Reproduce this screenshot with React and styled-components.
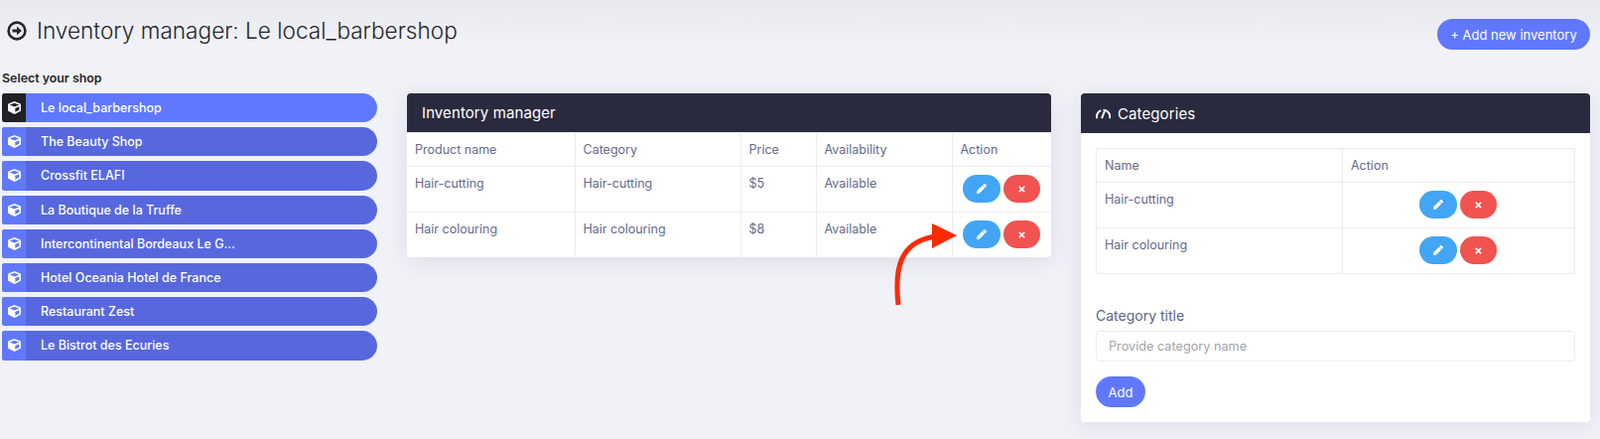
import styled, { createGlobalStyle } from "styled-components";
import { FaCube, FaPen, FaTimes } from "react-icons/fa";

const shops = [
  "Le local_barbershop",
  "The Beauty Shop",
  "Crossfit ELAFI",
  "La Boutique de la Truffe",
  "Intercontinental Bordeaux Le G...",
  "Hotel Oceania Hotel de France",
  "Restaurant Zest",
  "Le Bistrot des Ecuries",
];

const products = [
  ["Hair-cutting", "Hair-cutting", "$5", "Available"],
  ["Hair colouring", "Hair colouring", "$8", "Available"],
];

const categories = ["Hair-cutting", "Hair colouring"];

function RowActions() {
  return (
    <Actions>
      <EditBtn>
        <FaPen />
      </EditBtn>
      <DeleteBtn>
        <FaTimes />
      </DeleteBtn>
    </Actions>
  );
}

export default function App() {
  return (
    <Page>
      <GlobalStyle />
      <TopBar>
        <Title>
          <TitleIcon viewBox="0 0 20 20">
            <circle cx="10" cy="10" r="8.4" />
            <path d="M5.5 8.4 H10 V5.4 L15 10 L10 14.6 V11.6 H5.5 Z" />
          </TitleIcon>
          <span>Inventory manager: Le local_barbershop</span>
        </Title>
        <PrimaryBtn>+ Add new inventory</PrimaryBtn>
      </TopBar>
      <Columns>
        <div>
          <ListLabel>Select your shop</ListLabel>
          <ShopList>
            {shops.map((shop, i) => (
              <ShopItem key={shop} $active={i === 0}>
                <ShopIcon $active={i === 0}>
                  <FaCube />
                </ShopIcon>
                <span>{shop}</span>
              </ShopItem>
            ))}
          </ShopList>
        </div>
        <Card>
          <CardHeader $h={39}>Inventory manager</CardHeader>
          <OpenTable>
            <thead>
              <tr>
                <Th $w={169}>Product name</Th>
                <Th $w={167}>Category</Th>
                <Th $w={76}>Price</Th>
                <Th $w={137}>Availability</Th>
                <Th>Action</Th>
              </tr>
            </thead>
            <tbody>
              {products.map((row) => (
                <tr key={row[0]}>
                  {row.map((cell, i) => (
                    <Td key={i}>{cell}</Td>
                  ))}
                  <Td>
                    <RowActions />
                  </Td>
                </tr>
              ))}
            </tbody>
          </OpenTable>
        </Card>
        <Card>
          <CardHeader $h={40}>
            <GaugeIcon viewBox="0 0 16 12">
              <path d="M1.3 11.5 A7 7 0 0 1 5.6 3" />
              <path d="M8 2.4 A7.4 7.4 0 0 1 15 11.5" />
              <path d="M6.4 11.5 L9.6 3.6" />
            </GaugeIcon>
            Categories
          </CardHeader>
          <CardBody>
            <BorderedTable>
              <thead>
                <tr>
                  <Th $w={248}>Name</Th>
                  <Th>Action</Th>
                </tr>
              </thead>
              <tbody>
                {categories.map((name) => (
                  <tr key={name}>
                    <Td>{name}</Td>
                    <Td>
                      <RowActions />
                    </Td>
                  </tr>
                ))}
              </tbody>
            </BorderedTable>
            <FieldLabel htmlFor="category-title">Category title</FieldLabel>
            <TextInput id="category-title" placeholder="Provide category name" />
            <AddBtn>Add</AddBtn>
          </CardBody>
        </Card>
      </Columns>
      <Arrow viewBox="0 0 70 90">
        <path d="M7 84 C3 48 8 20 45 15" />
        <polygon points="41,2 66,14 41,27" />
      </Arrow>
    </Page>
  );
}

const GlobalStyle = createGlobalStyle`
  * {
    box-sizing: border-box;
  }
  body {
    margin: 0;
    background: #f1f2f8;
    font-family: Inter, "Open Sans", sans-serif;
  }
`;

const Page = styled.div`
  position: relative;
  height: 442px;
  padding: 19px 10px 0 2px;
  overflow: hidden;
  background: linear-gradient(#e8e9ef, #f1f2f8 45px);
`;

const TopBar = styled.div`
  display: flex;
  align-items: flex-start;
  justify-content: space-between;
  height: 31px;
`;

const Title = styled.h1`
  display: flex;
  align-items: center;
  gap: 10px;
  margin: -1px 0 0 5px;
  font-size: 22.6px;
  font-weight: 300;
  line-height: 26px;
  color: #25262b;
`;

const TitleIcon = styled.svg`
  width: 20px;
  height: 20px;
  circle {
    fill: none;
    stroke: #25262b;
    stroke-width: 2.6;
  }
  path {
    fill: #25262b;
  }
`;

const PrimaryBtn = styled.button`
  height: 31px;
  width: 154px;
  padding: 0;
  border: none;
  border-radius: 16px;
  background: #5f78ff;
  color: #fff;
  font: 400 13px Inter, sans-serif;
`;

const Columns = styled.div`
  display: grid;
  grid-template-columns: 378px 649px 513px;
  gap: 30px;
  align-items: start;
  margin-top: 20px;
`;

const ListLabel = styled.div`
  height: 24px;
  font-size: 12.4px;
  font-weight: 600;
  line-height: 18px;
  color: #25262b;
`;

const ShopList = styled.div`
  display: flex;
  flex-direction: column;
  gap: 5px;
`;

const ShopItem = styled.div`
  display: flex;
  align-items: center;
  gap: 15px;
  height: 29.2px;
  overflow: hidden;
  border-radius: 3px 15px 15px 3px;
  background: ${(p) => (p.$active ? "#5f78ff" : "#5768de")};
  color: #fff;
  font-size: 12.5px;
  font-weight: 500;
`;

const ShopIcon = styled.div`
  display: flex;
  align-items: center;
  justify-content: center;
  width: 24px;
  height: 100%;
  background: ${(p) => (p.$active ? "#202125" : "#5f78ff")};
  svg {
    width: 13px;
    height: 13px;
  }
`;

const Card = styled.div`
  margin-top: 24px;
  overflow: hidden;
  border-radius: 4px;
  background: #fff;
  box-shadow: 0 4px 24px rgba(40, 42, 70, 0.1);
`;

const CardHeader = styled.div`
  display: flex;
  align-items: center;
  gap: 7px;
  height: ${(p) => p.$h}px;
  padding: 0 15px;
  background: #292a3d;
  color: #fff;
  font-size: 15px;
  letter-spacing: 0.1px;
`;

const GaugeIcon = styled.svg`
  width: 15px;
  height: 12px;
  fill: none;
  stroke: #fff;
  stroke-width: 2.1;
`;

const CardBody = styled.div`
  padding: 15px;
`;

const BorderedTable = styled.table`
  width: 100%;
  table-layout: fixed;
  border-collapse: collapse;
  font-size: 12.5px;
  color: #646a8c;
  td:last-child {
    padding-right: 10px;
  }
`;

const OpenTable = styled(BorderedTable)`
  th:first-child,
  td:first-child {
    border-left: none;
  }
  th:last-child,
  td:last-child {
    padding-right: 8px;
    border-right: none;
  }
  tr:last-child td {
    height: 45px;
    border-bottom: none;
  }
`;

const Th = styled.th`
  width: ${(p) => (p.$w ? `${p.$w}px` : "auto")};
  height: 34px;
  padding: 9px 8px 8px;
  border: 1px solid #e9ebef;
  font-weight: 400;
  text-align: left;
  vertical-align: top;
`;

const Td = styled.td`
  height: 46px;
  padding: 9px 8px 8px;
  border: 1px solid #e9ebef;
  vertical-align: top;
`;

const Actions = styled.div`
  display: flex;
  justify-content: center;
  gap: 3px;
  margin-top: -1px;
`;

const RoundBtn = styled.button`
  display: flex;
  align-items: center;
  justify-content: center;
  width: 38px;
  height: 28px;
  padding: 0;
  border: none;
  border-radius: 14px;
  color: #fff;
`;

const EditBtn = styled(RoundBtn)`
  background: #42a5f6;
  svg {
    width: 10px;
    height: 10px;
  }
`;

const DeleteBtn = styled(RoundBtn)`
  width: 37px;
  background: #f05350;
  svg {
    width: 9px;
    height: 9px;
  }
`;

const FieldLabel = styled.label`
  display: block;
  margin-top: 32px;
  font-size: 14px;
  line-height: 20px;
  color: #5c6388;
`;

const TextInput = styled.input`
  display: block;
  width: 100%;
  height: 31px;
  margin-top: 5px;
  padding: 0 12px;
  border: 1px solid #e9ebef;
  border-radius: 4px;
  background: #fff;
  font: 400 12.7px Inter, sans-serif;
  &::placeholder {
    color: #a3a3a8;
  }
`;

const AddBtn = styled.button`
  display: block;
  width: 50px;
  height: 31px;
  margin-top: 15px;
  padding: 0;
  border: none;
  border-radius: 16px;
  background: #5f78ff;
  color: #fff;
  font: 400 13px Inter, sans-serif;
`;

const Arrow = styled.svg`
  position: absolute;
  left: 898px;
  top: 223px;
  width: 70px;
  height: 90px;
  path {
    fill: none;
    stroke: #ff2a00;
    stroke-width: 5;
  }
  polygon {
    fill: #ff2a00;
  }
`;
